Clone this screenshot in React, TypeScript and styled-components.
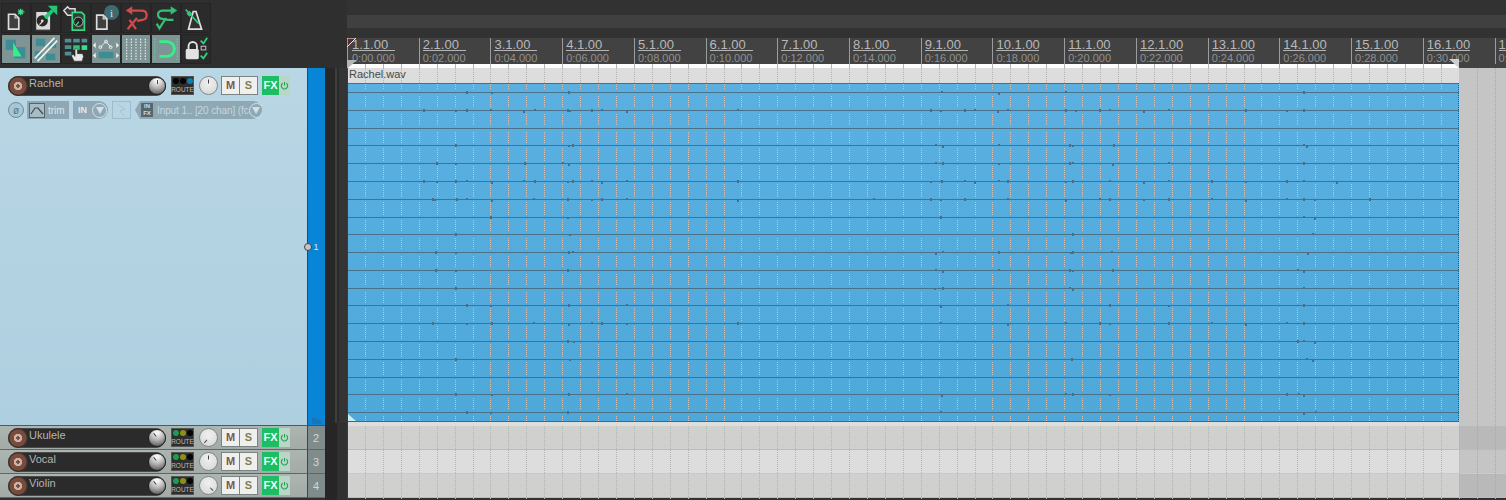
import React from 'react';
import styled, { createGlobalStyle } from 'styled-components';

const GlobalStyle = createGlobalStyle`
  html, body {
    margin: 0;
    background: #303030;
    font-family: "Liberation Sans", Arial, sans-serif;
  }
`;

const BEAT = 17.93;
const beatX = (k: number) => Math.round(k * BEAT) + 0.5;
const ITEM_W = 1112;

const LINES = [92, 110, 128, 145, 163, 181, 199, 217, 234, 252, 270, 288, 305, 323, 341, 359, 377, 394, 412];

// transient spots on each channel line, x in page pixels
const BLIPS: number[][] = [
  [466, 491, 568, 941, 998, 1065, 1303],
  [423, 455, 466, 490, 523, 534, 567, 569, 591, 601, 626, 737, 930, 940, 964, 974, 997, 1007, 1065, 1075, 1099, 1109, 1143, 1168, 1245, 1286, 1303],
  [],
  [455, 568, 572, 935, 942, 998, 1069, 1072, 1113, 1303, 1306],
  [436, 455, 524, 562, 568, 935, 942, 998, 1069, 1072, 1112, 1168, 1303],
  [423, 436, 455, 466, 491, 523, 534, 567, 572, 591, 601, 626, 737, 930, 941, 964, 974, 998, 1007, 1065, 1072, 1109, 1143, 1168, 1211, 1245, 1286, 1303, 1336],
  [432, 434, 456, 466, 491, 533, 567, 591, 601, 626, 737, 873, 930, 940, 964, 1007, 1065, 1099, 1109, 1143, 1168, 1211, 1245, 1286, 1303, 1314, 1369],
  [490, 567, 940, 1303, 1314],
  [455, 569, 1072, 1312],
  [435, 455, 568, 572, 935, 942, 998, 1070, 1072, 1111, 1307],
  [435, 455, 567, 935, 942, 998, 1069, 1072, 1112, 1297, 1303],
  [455, 934, 942, 1069, 1072, 1303],
  [466, 490, 568, 626, 940, 1007, 1109, 1168, 1303],
  [432, 466, 491, 533, 568, 591, 601, 626, 737, 940, 1007, 1065, 1099, 1109, 1168, 1211, 1245, 1286, 1303],
  [567, 573, 1297, 1303, 1314],
  [455, 569, 1071, 1306, 1312],
  [],
  [455, 491, 568, 626, 941, 1065, 1072, 1109, 1286, 1298, 1303],
  [466, 490, 567, 940, 1303, 1315],
];

const RULER = [
  ['1.1.00', '0:00.000'], ['2.1.00', '0:02.000'], ['3.1.00', '0:04.000'], ['4.1.00', '0:06.000'],
  ['5.1.00', '0:08.000'], ['6.1.00', '0:10.000'], ['7.1.00', '0:12.000'], ['8.1.00', '0:14.000'],
  ['9.1.00', '0:16.000'], ['10.1.00', '0:18.000'], ['11.1.00', '0:20.000'], ['12.1.00', '0:22.000'],
  ['13.1.00', '0:24.000'], ['14.1.00', '0:26.000'], ['15.1.00', '0:28.000'], ['16.1.00', '0:30.000'],
  ['17.1.00', '0:32.000'],
];

const TOOL_ICONS: { active?: boolean; svg: React.ReactNode }[] = [
  {
    svg: (
      <>
        <path d="M7 11h7l4 4v12H7z" fill="#3f3f3f" stroke="#ddd" strokeWidth="1.800" />
        <path d="M14 11v4h4" fill="none" stroke="#ddd" strokeWidth="1.200" />
        <path d="M20 5v7M17 8.500h7M17.500 6l5 5M22.500 6l-5 5" stroke="#3fe08f" strokeWidth="1.300" />
      </>
    ),
  },
  {
    svg: (
      <>
        <path d="M4 8h12l4 4v16H4z" fill="#dadada" stroke="#222" strokeWidth="1" />
        <circle cx="11" cy="18" r="6" fill="#2a2a2a" />
        <circle cx="11" cy="18" r="1.500" fill="#ddd" />
        <path d="M8 22l3-3" stroke="#ddd" strokeWidth="1.200" />
        <path d="M14 15l8-8" stroke="#23c876" strokeWidth="4" />
        <path d="M17 2h10v10z" fill="#23c876" />
      </>
    ),
  },
  {
    svg: (
      <>
        <path d="M2 7l4-4 2 2h6v7H6z" fill="#3a3a3a" stroke="#ddd" strokeWidth="1.600" />
        <path d="M11 9h10l3 3v16H11z" fill="#2f3f36" stroke="#36d884" strokeWidth="1.800" />
        <circle cx="17.500" cy="19" r="5" fill="#222" stroke="#bbb" strokeWidth="1" />
        <path d="M15 23l3-4" stroke="#36d884" strokeWidth="1.400" />
      </>
    ),
  },
  {
    svg: (
      <>
        <circle cx="21" cy="9" r="8" fill="#3e6a72" />
        <text x="21" y="13.500" fontSize="12" fontFamily="Liberation Serif, serif" fill="#e2e2e2" textAnchor="middle">i</text>
        <path d="M5 12h7l4 4v11H5z" fill="#3f3f3f" stroke="#ddd" strokeWidth="1.800" />
        <path d="M12 12v4h4" fill="none" stroke="#ddd" strokeWidth="1.200" />
      </>
    ),
  },
  {
    svg: (
      <>
        <path d="M9 7h12c7 0 7 9 1 10l-6 1" fill="none" stroke="#d24b4b" strokeWidth="2.400" />
        <path d="M4 7l7-4.500v9z" fill="#d24b4b" />
        <path d="M6 27L16 15M8 17l7 10" stroke="#d24b4b" strokeWidth="2.400" fill="none" />
      </>
    ),
  },
  {
    svg: (
      <>
        <path d="M21 7H11C5 7 5 15 11 16l6 1h6" fill="none" stroke="#35c077" strokeWidth="2.400" />
        <path d="M27 7l-7-4.500v9z" fill="#35c077" />
        <path d="M5 21l3 5 7-11" stroke="#35c077" strokeWidth="2.400" fill="none" />
      </>
    ),
  },
  {
    svg: (
      <>
        <path d="M7 27l5-19h3l6 19z" fill="#303030" stroke="#e0e0e0" strokeWidth="1.800" />
        <path d="M4 6l14 15" stroke="#2fca79" strokeWidth="1.800" />
        <rect x="6" y="8" width="4.500" height="4.500" fill="#2fca79" transform="rotate(45 8 10)" />
      </>
    ),
  },
  {
    active: true,
    svg: (
      <>
        <rect x="4" y="5" width="11" height="11" fill="#3d8d94" />
        <rect x="13" y="13" width="12" height="12" fill="#3d8d94" />
        <path d="M12 8l9 15h-9z" fill="#35f08a" />
      </>
    ),
  },
  {
    active: true,
    svg: (
      <>
        <rect x="4" y="4" width="10" height="8" fill="#3d8d94" />
        <rect x="18" y="7" width="8" height="7" fill="#3d8d94" />
        <rect x="3" y="17" width="8" height="7" fill="#3d8d94" />
        <rect x="15" y="20" width="10" height="7" fill="#3d8d94" />
        <path d="M3 25L24 3M6 28L27 6" stroke="#eef3ef" strokeWidth="1.800" fill="none" />
        <path d="M4 27L25 5" stroke="#7f9595" strokeWidth=".9" strokeDasharray="4 2" />
      </>
    ),
  },
  {
    svg: (
      <>
        <path d="M3 4h7v4H3zM12 4h7v4h-7zM21 4h6v4h-6zM3 11h7v4H3zM3 18h7v4H3z" fill="#4f8f94" />
        <path d="M12 11h7v5h-7z" fill="#35c077" />
        <path d="M21 11h6v5h-6z" fill="#35e08a" />
        <path d="M13 28l-3-6 2-1 2 2v-8h2.500v5h5.500l1 3-1.500 5z" fill="#e8e8e8" stroke="#222" strokeWidth=".500" />
      </>
    ),
  },
  {
    active: true,
    svg: (
      <>
        <path d="M9 13l6-6 5 6" fill="none" stroke="#eef3ef" strokeWidth="1" />
        <circle cx="9" cy="13" r="1.500" fill="none" stroke="#eef3ef" />
        <circle cx="15" cy="7" r="1.500" fill="none" stroke="#eef3ef" />
        <circle cx="20" cy="13" r="1.500" fill="none" stroke="#eef3ef" />
        <path d="M1 11l3-3v6zM29 11l-3-3v6zM1 22l3-3v6zM29 22l-3-3v6z" fill="#eef3ef" />
        <rect x="7" y="18" width="16" height="7" fill="#3d8d94" />
      </>
    ),
  },
  {
    active: true,
    svg: <path d="M5 4v23M10 4v23M15 4v23M20 4v23M25 4v23" stroke="#eef3ef" strokeWidth="1.200" strokeDasharray="1.500 1.500" />,
  },
  {
    active: true,
    svg: (
      <>
        <path d="M3 4v23M27 4v23" stroke="#55e09a" strokeWidth="1" strokeDasharray="1.500 1.500" />
        <path d="M8 7h8a7.500 7.500 0 0 1 0 16H8" fill="none" stroke="#35f08a" strokeWidth="3" />
      </>
    ),
  },
  {
    svg: (
      <>
        <path d="M7 15v-3a4.500 4.500 0 0 1 9 0v3" fill="none" stroke="#e2e2e2" strokeWidth="2" />
        <rect x="4" y="15" width="14" height="11" rx="1.500" fill="#e2e2e2" />
        <path d="M20 6l3 3 4-6" fill="none" stroke="#2fd67f" strokeWidth="1.800" />
        <rect x="20.500" y="12" width="5" height="4" fill="none" stroke="#ccc" />
        <path d="M20 22l3 3 4-6" fill="none" stroke="#2fd67f" strokeWidth="1.800" />
      </>
    ),
  },
];

const Page = styled.div`
  position: relative;
  display: grid;
  grid-template-columns: 347px 1fr;
  width: 1506px;
  height: 500px;
  overflow: hidden;
`;

const LeftColumn = styled.div`
  display: flex;
  flex-direction: column;
  min-width: 0;
`;

const Toolbar = styled.div`
  display: grid;
  grid-template-columns: repeat(7, 30px);
  grid-auto-rows: 30px;
  row-gap: 1px;
  height: 68px;
  box-sizing: border-box;
  padding: 3px 0 0 1px;
  background: #2f2f2f;
`;

const ToolButton = styled.div<{ $active?: boolean }>`
  box-sizing: border-box;
  border: 1px solid #242424;
  background: ${(p) => (p.$active ? '#7f9595' : '#2b2b2b')};
  svg {
    display: block;
    width: 28px;
    height: 28px;
  }
`;

const PanelBody = styled.div`
  flex: 1;
  display: grid;
  grid-template-columns: 325px 22px;
  min-height: 0;
`;

const TrackStack = styled.div`
  display: flex;
  flex-direction: column;
`;

const Scrollbar = styled.div`
  display: flex;
  flex-direction: column;
`;

const ScrollThumb = styled.div`
  height: 355px;
  background: linear-gradient(90deg, #272727 0 10px, #3e3e3e 10px 12px, #2a2a2a 12px 14px, #343434 14px);
`;

const ScrollRest = styled.div`
  flex: 1;
  background: linear-gradient(90deg, #262626 0 12px, #303030 12px);
`;

const TrackRow = styled.div<{ $tall?: boolean }>`
  display: grid;
  grid-template-columns: 308px 17px;
  height: ${(p) => (p.$tall ? '358px' : '24px')};
`;

const TrackBody = styled.div<{ $tall?: boolean }>`
  box-sizing: border-box;
  border-right: 1px solid #39464c;
  padding: ${(p) => (p.$tall ? '8px 0 0 8px' : '2px 0 0 8px')};
  background: ${(p) => (p.$tall ? 'linear-gradient(#b9d6e4, #aecfe0)' : 'linear-gradient(#adb5b1, #a3aba8)')};
  border-bottom: 1px solid ${(p) => (p.$tall ? '#4d5a5e' : '#5f6765')};
`;

const TrackNumber = styled.div<{ $selected?: boolean }>`
  position: relative;
  display: flex;
  align-items: center;
  justify-content: center;
  box-sizing: border-box;
  padding-right: 1px;
  font-size: ${(p) => (p.$selected ? 9 : 11)}px;
  background: ${(p) => (p.$selected ? '#0985d8' : '#7f8c8b')};
  color: ${(p) => (p.$selected ? '#cfe8fa' : '#d2d7d5')};
  border-bottom: 1px solid ${(p) => (p.$selected ? '#3d5563' : '#5f6765')};
`;

const FolderMark = styled.span`
  position: absolute;
  left: 4px;
  bottom: 1px;
  width: 9px;
  height: 6px;
  background: #1a72b8;
  clip-path: polygon(0 0, 45% 0, 55% 25%, 100% 25%, 100% 100%, 0 100%);
`;

const ControlLine = styled.div`
  display: flex;
  align-items: flex-start;
`;

const NameField = styled.div`
  position: relative;
  display: flex;
  width: 158px;
  height: 20px;
  box-sizing: border-box;
  padding: 0 0 0 20px;
  border-radius: 10px;
  background: #2b2b2b;
  border: 1px solid #4a4a4a;
  color: #b4b4b4;
  font-size: 11px;
  line-height: 13px;
`;

const RecArm = styled.span`
  position: absolute;
  left: -1px;
  top: -1px;
  width: 20px;
  height: 20px;
  box-sizing: border-box;
  border-radius: 50%;
  background: radial-gradient(circle, #7a4a3a 0 1.500px, #c9b3aa 2px 4px, #7a4a3a 4.500px 8px, #3a3230 9px);
`;

const Knob = styled.span<{ $angle: number; $light?: boolean; $size: number }>`
  position: relative;
  display: block;
  flex: none;
  width: ${(p) => p.$size}px;
  height: ${(p) => p.$size}px;
  box-sizing: border-box;
  border-radius: 50%;
  border: 1px solid ${(p) => (p.$light ? '#7f8a8c' : '#222')};
  background: ${(p) =>
    p.$light
      ? 'radial-gradient(circle at 50% 35%, #f0f0f0, #d4d4d4)'
      : 'radial-gradient(circle at 50% 15%, #f5f5f5 10%, #b0b0b0 50%, #4f4f4f 95%)'};
  &::after {
    content: '';
    position: absolute;
    left: calc(50% - 0.5px);
    top: calc(50% - 2px);
    width: 1px;
    height: 4px;
    background: #444;
    transform: rotate(${(p) => p.$angle}deg) translateY(-${(p) => p.$size / 2 - 5}px);
  }
`;

const NameKnob = styled(Knob)`
  position: absolute;
  right: -1px;
  top: 0;
`;

const RouteBox = styled.div`
  display: flex;
  flex-direction: column;
  align-items: center;
  box-sizing: border-box;
  width: 23px;
  height: 19px;
  margin-left: 5px;
  padding-top: 1px;
  background: #2e2e2e;
  border: 1px solid #555;
  color: #bcbcbc;
  font-size: 6.500px;
  line-height: 8px;
`;

const RouteDots = styled.div`
  display: flex;
  gap: 1px;
  height: 8px;
`;

const RouteDot = styled.span<{ $color: string }>`
  width: 6px;
  height: 6px;
  border-radius: 50%;
  background: ${(p) => p.$color};
`;

const PanKnobSlot = styled.div`
  margin-left: 5px;
`;

const MuteSolo = styled.div`
  display: flex;
  margin-left: 4px;
`;

const ToggleButton = styled.div<{ $color: string }>`
  width: 19px;
  height: 19px;
  box-sizing: border-box;
  border: 1px solid #7c8482;
  margin-left: -1px;
  background: #efefef;
  color: ${(p) => p.$color};
  font-size: 11px;
  font-weight: 700;
  line-height: 17px;
  text-align: center;
`;

const FxGroup = styled.div`
  display: flex;
  margin-left: 4px;
  height: 19px;
`;

const FxButton = styled.div`
  width: 17px;
  background: #1dbd66;
  color: #f2fff7;
  font-size: 11px;
  font-weight: 700;
  line-height: 19px;
  text-align: center;
`;

const FxPower = styled.div`
  display: flex;
  align-items: center;
  justify-content: center;
  width: 11px;
  background: #b9d6c6;
  svg {
    width: 9px;
    height: 9px;
  }
`;

const SecondLine = styled.div`
  display: flex;
  align-items: center;
  height: 18px;
  margin-top: 5px;
`;

const PhaseButton = styled.div`
  display: flex;
  align-items: center;
  justify-content: center;
  width: 16px;
  height: 16px;
  box-sizing: border-box;
  border-radius: 50%;
  background: #a9c6d5;
  border: 1px solid #6f8b99;
  color: #5b7483;
  font-size: 10px;
`;

const TrimButton = styled.div`
  display: flex;
  align-items: center;
  gap: 3px;
  width: 42px;
  height: 18px;
  box-sizing: border-box;
  margin-left: 3px;
  padding-left: 2px;
  background: #8ea8b5;
  color: #dbe6ea;
  font-size: 10px;
  svg {
    width: 16px;
    height: 15px;
  }
`;

const InPill = styled.div`
  display: flex;
  align-items: center;
  justify-content: space-between;
  width: 35px;
  height: 18px;
  box-sizing: border-box;
  margin-left: 4px;
  padding: 0 1px 0 5px;
  border-radius: 0 9px 9px 0;
  background: #8ea8b5;
  color: #e3ecef;
  font-size: 9px;
  font-weight: 700;
`;

const ArrowRound = styled.span`
  display: flex;
  align-items: center;
  justify-content: center;
  width: 15px;
  height: 15px;
  box-sizing: border-box;
  flex: none;
  border-radius: 50%;
  border: 1px solid #d4e2e8;
  &::after {
    content: '';
    border-left: 4.500px solid transparent;
    border-right: 4.500px solid transparent;
    border-top: 7px solid #d4e2e8;
  }
`;

const InputMode = styled.div`
  width: 19px;
  height: 18px;
  box-sizing: border-box;
  margin-left: 4px;
  border: 1px solid #9dbccb;
  svg {
    display: block;
    width: 17px;
    height: 16px;
  }
`;

const InputPill = styled.div`
  display: flex;
  align-items: center;
  width: 127px;
  height: 18px;
  box-sizing: border-box;
  margin-left: 4px;
  padding: 0 1px 0 6px;
  border-radius: 0 9px 9px 0;
  background: #8ea8b5;
  clip-path: polygon(0 50%, 5px 0, 100% 0, 100% 100%, 5px 100%);
  color: #c6d7de;
  font-size: 10px;
`;

const InFxBadge = styled.span`
  flex: none;
  width: 12px;
  height: 14px;
  margin-right: 4px;
  background: #56666d;
  color: #d3dde1;
  font-size: 6px;
  font-weight: 700;
  line-height: 7px;
  text-align: center;
`;

const InputName = styled.span`
  flex: 1;
  letter-spacing: -0.1px;
  white-space: nowrap;
`;

const HeightHandle = styled.span`
  position: absolute;
  left: 304px;
  top: 243px;
  width: 8px;
  height: 8px;
  box-sizing: border-box;
  border-radius: 50%;
  background: #c4c4c4;
  border: 1.500px solid #444;
`;

const RightColumn = styled.div`
  position: relative;
  display: flex;
  flex-direction: column;
  min-width: 0;
  background: #323232;
`;

const TopBand = styled.div`
  height: 13px;
  margin: 15px 0 10px;
  background: #404040;
`;

const Ruler = styled.div`
  display: flex;
  height: 26px;
  overflow: hidden;
  background: #424242;
`;

const RulerCell = styled.div<{ $first?: boolean }>`
  position: relative;
  flex: 0 0 ${BEAT * 4}px;
  box-sizing: border-box;
  padding: 1px 0 0 ${(p) => (p.$first ? 4 : 3)}px;
  border-left: 1px solid #9c9c9c;
`;

const RulerBar = styled.div`
  width: 43px;
  height: 11px;
  border-bottom: 1px solid #b4b4b4;
  color: #b8b8b8;
  font-size: 13px;
  line-height: 11px;
  white-space: nowrap;
`;

const RulerTime = styled.div`
  margin-top: 2px;
  color: #909090;
  font-size: 11px;
  line-height: 11px;
  white-space: nowrap;
`;

const CursorFlag = styled.svg`
  position: absolute;
  left: 0;
  top: 38px;
  width: 12px;
  height: 30px;
`;

const EndFlag = styled.svg`
  position: absolute;
  left: 1102px;
  top: 56px;
  width: 11px;
  height: 12px;
`;

const Arrange = styled.div`
  position: relative;
  flex: 1;
  display: flex;
  flex-direction: column;
  border-left: 1px solid #5a2f30;
`;

const TickStrip = styled.div`
  display: flex;
  height: 4px;
`;

const StripLive = styled.div`
  flex: 0 0 ${ITEM_W - 1}px;
  background: #fdfdfd;
`;

const StripPast = styled.div`
  flex: 1;
  background: #424242;
`;

const MainLane = styled.div`
  display: flex;
  height: 358px;
`;

const Item = styled.div`
  flex: 0 0 ${ITEM_W - 1}px;
  display: flex;
  flex-direction: column;
  background: #dcdddc;
`;

const ItemTitle = styled.div`
  height: 15px;
  padding-left: 1px;
  color: #474747;
  font-size: 11px;
  line-height: 13px;
`;

const Wave = styled.svg`
  display: block;
  width: 100%;
  height: 339px;
`;

const Lane = styled.div<{ $alt?: boolean }>`
  display: flex;
  height: 24px;
  box-sizing: border-box;
  border-bottom: 1px solid ${(p) => (p.$alt ? '#c8c9c8' : '#bcbdbb')};
  background: ${(p) => (p.$alt ? '#dcdddc' : '#d0d1cf')};
`;

const LaneFill = styled.div`
  flex: 0 0 ${ITEM_W - 1}px;
`;

const LanePast = styled.div<{ $alt?: boolean }>`
  flex: 1;
  background: ${(p) => (p.$alt ? '#c4c5c4' : '#b8b9b8')};
`;

const MainPast = styled.div`
  flex: 1;
  background: #c4c5c4;
`;

const GridOverlay = styled.svg`
  position: absolute;
  left: 0;
  top: 0;
  width: 1159px;
  height: 436px;
  pointer-events: none;
`;

const TAN = '#d4c2b6';
const GREY = '#b4b4b4';

// dotted beat lines, broken up around the channel lines of the wave.
// every segment starts on an even row so the dots stay in phase from one to the next
function GridLines() {
  const segs: [number, number][] = [];
  let top = 20;
  LINES.forEach((y) => {
    segs.push([top, y - 64 - 2]);
    const next = y - 64 + 3;
    top = next + (next % 2);
  });
  segs.push([top, 357]);

  const beats = Array.from({ length: 64 }, (_, k) => k + 1);
  return (
    <GridOverlay viewBox="0 0 1159 436" shapeRendering="crispEdges">
      {beats.map((k) => {
        const x = beatX(k) - 1;
        if (k === 62) {
          return <line key={k} x1={x} x2={x} y1={362} y2={436} stroke={GREY} strokeDasharray="1 1" />;
        }
        if (k > 62) {
          return <line key={k} x1={x} x2={x} y1={4} y2={436} stroke="#a8a9a8" strokeDasharray="1 1" />;
        }
        return (
          <g key={k}>
            <line x1={x} x2={x} y1={0} y2={4} stroke="#b5b5b5" />
            <line x1={x} x2={x} y1={4} y2={19} stroke={GREY} strokeDasharray="1 1" />
            {segs.map(([a, b]) => (
              <line key={a} x1={x} x2={x} y1={a} y2={b} stroke={TAN} strokeDasharray="1 1" />
            ))}
            <line x1={x} x2={x} y1={362} y2={436} stroke={GREY} strokeDasharray="1 1" />
          </g>
        );
      })}
    </GridOverlay>
  );
}

function WaveForm() {
  return (
    <Wave viewBox={`0 0 ${ITEM_W - 1} 339`} preserveAspectRatio="none">
      <defs>
        <linearGradient id="waveBg" x1="0" x2="0" y1="0" y2="1">
          <stop offset="0" stopColor="#5ab0e1" />
          <stop offset="1" stopColor="#4ea8da" />
        </linearGradient>
      </defs>
      <rect width={ITEM_W - 1} height="339" fill="url(#waveBg)" />
      <rect width={ITEM_W - 1} height="1" fill="#4a7188" />
      <rect y="338" width={ITEM_W - 1} height="1" fill="#2f6c92" />
      {LINES.map((y, i) => (
        <g key={y}>
          <rect y={y - 83} width={ITEM_W - 1} height="1" fill="#4a7188" />
          {BLIPS[i].map((x, j) => (
            <rect key={j} x={x - 348} y={y - 84 + (j % 3 === 1 ? 1 : 0)} width={2} height={j % 2 ? 2 : 3} fill="#4a6e88" />
          ))}
        </g>
      ))}
      <path d="M0 331l8 7H0z" fill="#c4f0f2" />
      <path d={`M${ITEM_W - 1.5} 0V339`} stroke="#39566a" strokeDasharray="1 1" />
    </Wave>
  );
}

const PowerIcon = () => (
  <svg viewBox="0 0 10 10">
    <path d="M3 2.500a3.500 3.500 0 1 0 4 0M5 1v4" fill="none" stroke="#23a45c" strokeWidth="1.200" />
  </svg>
);

interface StripProps {
  name: string;
  dots: string[];
  pan: number;
  nameKnob: number;
}

const ChannelControls = ({ name, dots, pan, nameKnob }: StripProps) => (
  <ControlLine>
    <NameField>
      <RecArm />
      {name}
      <NameKnob $angle={nameKnob} $size={18} />
    </NameField>
    <RouteBox>
      <RouteDots>
        {dots.map((c, i) => (
          <RouteDot key={i} $color={c} />
        ))}
      </RouteDots>
      ROUTE
    </RouteBox>
    <PanKnobSlot>
      <Knob $angle={pan} $light $size={19} />
    </PanKnobSlot>
    <MuteSolo>
      <ToggleButton $color="#7a5a4c">M</ToggleButton>
      <ToggleButton $color="#80804f">S</ToggleButton>
    </MuteSolo>
    <FxGroup>
      <FxButton>FX</FxButton>
      <FxPower>
        <PowerIcon />
      </FxPower>
    </FxGroup>
  </ControlLine>
);

const OTHER_TRACKS = [
  { name: 'Ukulele', pan: -140, n: 2 },
  { name: 'Vocal', pan: 0, n: 3 },
  { name: 'Violin', pan: 135, n: 4 },
];

const SMALL_DOTS = ['#1f9a4f', '#8f8f14', '#050505'];

export default function App() {
  return (
    <Page>
      <GlobalStyle />
      <LeftColumn>
        <Toolbar>
          {TOOL_ICONS.map((icon, i) => (
            <ToolButton key={i} $active={icon.active}>
              <svg viewBox="0 0 30 30">{icon.svg}</svg>
            </ToolButton>
          ))}
        </Toolbar>
        <PanelBody>
          <TrackStack>
            <TrackRow $tall>
              <TrackBody $tall>
                <ChannelControls name="Rachel" dots={['#050505', '#050505', '#0d7fb0']} pan={0} nameKnob={0} />
                <SecondLine>
                  <PhaseButton>ø</PhaseButton>
                  <TrimButton>
                    <svg viewBox="0 0 16 15">
                      <rect x=".5" y=".5" width="15" height="14" fill="#a9bcc5" stroke="#56666d" />
                      <path d="M2 11l4-6 3 0 5 6" fill="none" stroke="#3a4a50" strokeWidth="1.200" />
                    </svg>
                    trim
                  </TrimButton>
                  <InPill>
                    IN
                    <ArrowRound />
                  </InPill>
                  <InputMode>
                    <svg viewBox="0 0 17 16">
                      <path d="M4 2l8 5-5 2 4 5" fill="none" stroke="#a6c4d2" strokeWidth="1" />
                    </svg>
                  </InputMode>
                  <InputPill>
                    <InFxBadge>
                      IN
                      <br />
                      FX
                    </InFxBadge>
                    <InputName>Input 1.. [20 chan] (fc</InputName>
                    <ArrowRound />
                  </InputPill>
                </SecondLine>
              </TrackBody>
              <TrackNumber $selected>
                1
                <FolderMark />
              </TrackNumber>
            </TrackRow>
            {OTHER_TRACKS.map((t) => (
              <TrackRow key={t.n}>
                <TrackBody>
                  <ChannelControls name={t.name} dots={SMALL_DOTS} pan={t.pan} nameKnob={-40} />
                </TrackBody>
                <TrackNumber>{t.n}</TrackNumber>
              </TrackRow>
            ))}
          </TrackStack>
          <Scrollbar>
            <ScrollThumb />
            <ScrollRest />
          </Scrollbar>
        </PanelBody>
      </LeftColumn>
      <RightColumn>
        <TopBand />
        <Ruler>
          {RULER.map(([bar, time], i) => (
            <RulerCell key={bar} $first={i === 0}>
              <RulerBar>{bar}</RulerBar>
              <RulerTime>{time}</RulerTime>
            </RulerCell>
          ))}
        </Ruler>
        <Arrange>
          <TickStrip>
            <StripLive />
            <StripPast />
          </TickStrip>
          <MainLane>
            <Item>
              <ItemTitle>Rachel.wav</ItemTitle>
              <WaveForm />
            </Item>
            <MainPast />
          </MainLane>
          {[false, true, false].map((alt, i) => (
            <Lane key={i} $alt={alt}>
              <LaneFill />
              <LanePast $alt={alt} />
            </Lane>
          ))}
          <GridLines />
        </Arrange>
        <CursorFlag viewBox="0 0 12 30">
          <path d="M0 0h9L0 9z" fill="#5a2f30" stroke="#eee" strokeWidth="1" />
          <path d="M0 22h10L1 30H0z" fill="#b5b5b5" />
        </CursorFlag>
        <EndFlag viewBox="0 0 11 12">
          <path d="M0 3h10v9z" fill="#cfcfcf" />
        </EndFlag>
      </RightColumn>
      <HeightHandle />
    </Page>
  );
}
